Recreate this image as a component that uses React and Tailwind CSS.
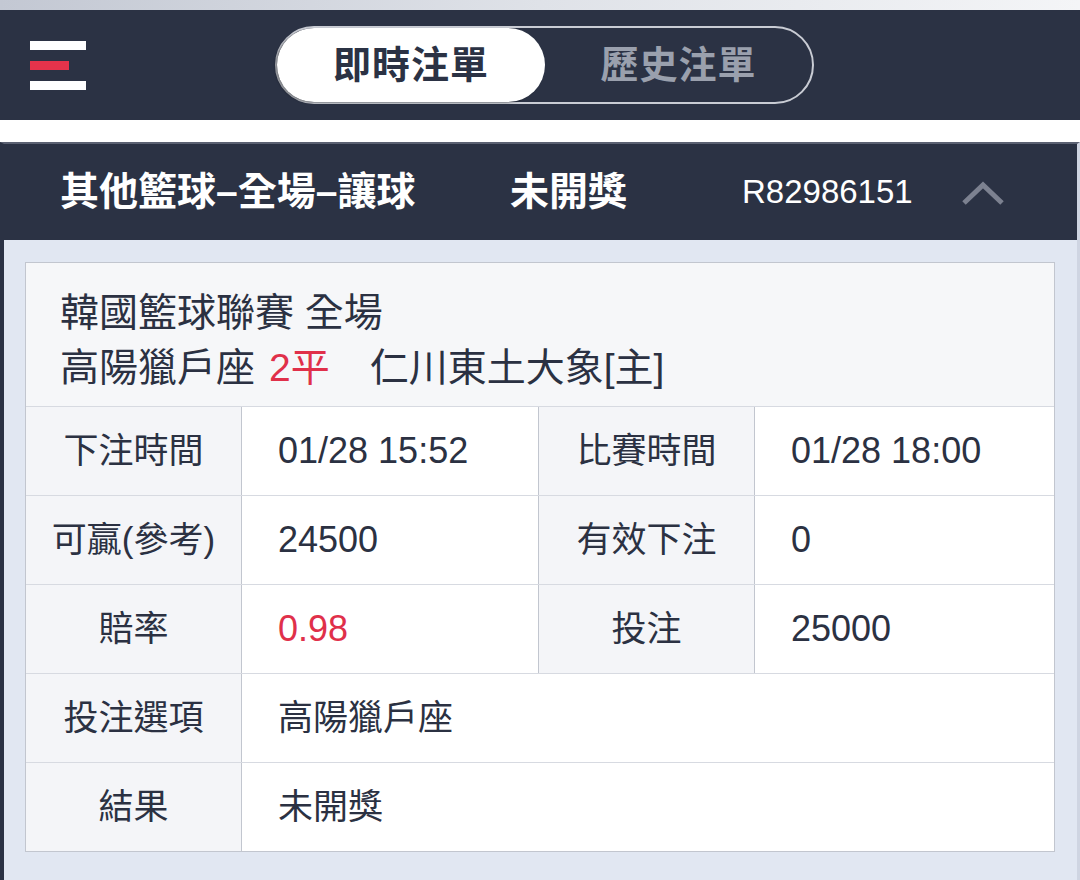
import React, { useState } from "react";

const rows = [
  [
    { label: "下注時間", value: "01/28 15:52" },
    { label: "比賽時間", value: "01/28 18:00" },
  ],
  [
    { label: "可贏(參考)", value: "24500" },
    { label: "有效下注", value: "0" },
  ],
  [
    { label: "賠率", value: "0.98", red: true },
    { label: "投注", value: "25000" },
  ],
];

const wideRows = [
  { label: "投注選項", value: "高陽獵戶座" },
  { label: "結果", value: "未開獎" },
];

const App = () => {
  const [tab, setTab] = useState("live");
  const [open, setOpen] = useState(true);

  return (
    <div
      className="w-[1080px] h-[880px] overflow-hidden bg-white text-[#2b3142]"
      style={{ fontFamily: '"Liberation Sans", "Noto Sans CJK TC", sans-serif' }}
    >
      {/* top strip */}
      <div className="h-[10px] bg-gradient-to-r from-[#c3c8d3] via-[#dfe2e8] to-[#f4f5f7]"></div>

      {/* nav bar */}
      <div className="h-[110px] bg-[#2b3244] flex items-center relative">
        <button className="ml-[30px] flex flex-col gap-[11px] w-[56px]">
          <span className="block h-[9px] w-[56px] bg-white"></span>
          <span className="block h-[9px] w-[39px] bg-[#e5334b]"></span>
          <span className="block h-[9px] w-[56px] bg-white"></span>
        </button>

        <div className="ml-[189px] w-[539px] h-[78px] rounded-full border-2 border-[#c9ccd4] flex items-stretch">
          <button
            onClick={() => setTab("live")}
            className={`w-[268px] rounded-full text-[38px] font-bold tracking-[1px] ${
              tab === "live" ? "bg-white text-[#2b3244] shadow-[-2px_1px_2px_rgba(0,0,0,0.35)]" : "text-[#9aa0ad]"
            }`}
          >
            即時注單
          </button>
          <button
            onClick={() => setTab("history")}
            className={`flex-1 rounded-full text-[38px] font-bold tracking-[1px] ${
              tab === "history" ? "bg-white text-[#2b3244]" : "text-[#9aa0ad]"
            }`}
          >
            歷史注單
          </button>
        </div>
      </div>

      <div className="h-[22px] bg-white"></div>

      {/* bet card */}
      <div className="border-t-2 border-t-[#5b6172] border-l-4 border-l-[#2b3244] border-r-[3px] border-r-[#cfd5e2] bg-[#e1e7f2] h-[738px]">
        <div className="h-[96px] bg-[#2b3244] flex items-center text-white">
          <span className="ml-[56px] w-[450px] text-[39px] font-bold">其他籃球–全場–讓球</span>
          <span className="w-[232px] text-[39px] font-bold">未開獎</span>
          <span className="w-[218px] text-[33px]">R82986151</span>
          <button onClick={() => setOpen(!open)} className="w-[46px] h-[30px]">
            <svg width="46" height="30" viewBox="0 0 46 30">
              <path d="M4 26 L23 8 L42 26" fill="none" stroke="#7c8190" strokeWidth="5" />
            </svg>
          </button>
        </div>

        {open && (
          <div className="pt-[22px] pl-[21px] pr-[22px]">
            <div className="border border-[#c2c6cf] bg-[#f6f7f9]">
              <div className="h-[143px] pl-[34px] pt-[22px] text-[39px] leading-[55px]">
                <div>韓國籃球聯賽 全場</div>
                <div>
                  高陽獵戶座<span className="ml-[14px] text-[#e0304a]">2平</span>
                  <span className="ml-[40px]">仁川東土大象[主]</span>
                </div>
              </div>

              {rows.map((row, i) => (
                <div key={i} className="flex h-[89px] border-t border-[#d7dae1] text-[35px]">
                  <div className="w-[216px] flex items-center justify-center bg-[#f4f5f8] border-r border-[#c2c6cf]">
                    {row[0].label}
                  </div>
                  <div
                    className={`w-[297px] flex items-center pl-[36px] bg-white border-r border-[#c2c6cf] text-[36px] ${
                      row[0].red ? "text-[#e0304a]" : ""
                    }`}
                  >
                    {row[0].value}
                  </div>
                  <div className="w-[216px] flex items-center justify-center bg-[#f4f5f8] border-r border-[#c2c6cf]">
                    {row[1].label}
                  </div>
                  <div className="flex-1 flex items-center pl-[36px] bg-white text-[36px]">{row[1].value}</div>
                </div>
              ))}

              {wideRows.map((row) => (
                <div key={row.label} className="flex h-[89px] border-t border-[#d7dae1] text-[35px]">
                  <div className="w-[216px] flex items-center justify-center bg-[#f4f5f8] border-r border-[#c2c6cf]">
                    {row.label}
                  </div>
                  <div className="flex-1 flex items-center pl-[36px] bg-white">{row.value}</div>
                </div>
              ))}
            </div>
          </div>
        )}
      </div>
    </div>
  );
};

export default App;
